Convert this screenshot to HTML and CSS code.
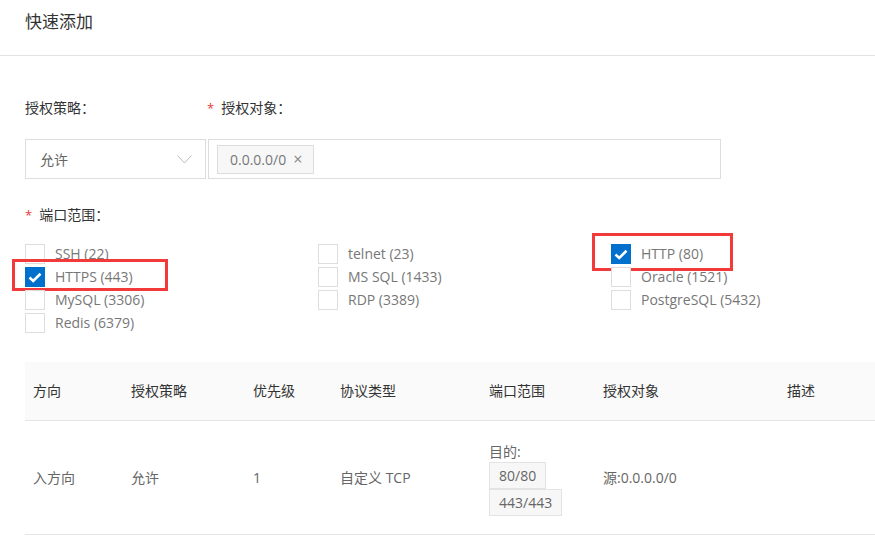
FILE: index.html
```html
<!DOCTYPE html>
<html lang="zh-CN">
<head>
<meta charset="utf-8">
<title>快速添加</title>
<link rel="stylesheet" href="styles.css">
</head>
<body>
<header class="head"><h1 class="title">快速添加</h1></header>

<section class="form">
  <div class="label-row">
    <div class="label label-policy">授权策略：</div>
    <div class="label"><span class="req">*</span>授权对象：</div>
  </div>
  <div class="input-row">
    <div class="select">
      <span>允许</span>
      <svg class="chev" width="15" height="9" viewBox="0 0 15 9"><path d="M0.5 0.5 L7.5 8 L14.5 0.5" fill="none" stroke="#bbb" stroke-width="1"/></svg>
    </div>
    <div class="tags-input">
      <span class="tag">0.0.0.0/0<span class="x">×</span></span>
    </div>
  </div>

  <div class="label label-ports"><span class="req">*</span>端口范围：</div>
  <div class="checks">
    <label class="check"><span class="box"></span>SSH (22)</label>
    <label class="check"><span class="box"></span>telnet (23)</label>
    <label class="check mark-b"><span class="box on"><svg width="14" height="11" viewBox="0 0 14 11"><path d="M1.5 5.5 L5.2 9 L12.5 1.8" fill="none" stroke="#fff" stroke-width="2.6"/></svg></span>HTTP (80)</label>
    <label class="check mark-a"><span class="box on"><svg width="14" height="11" viewBox="0 0 14 11"><path d="M1.5 5.5 L5.2 9 L12.5 1.8" fill="none" stroke="#fff" stroke-width="2.6"/></svg></span>HTTPS (443)</label>
    <label class="check"><span class="box"></span>MS SQL (1433)</label>
    <label class="check"><span class="box"></span>Oracle (1521)</label>
    <label class="check"><span class="box"></span>MySQL (3306)</label>
    <label class="check"><span class="box"></span>RDP (3389)</label>
    <label class="check"><span class="box"></span>PostgreSQL (5432)</label>
    <label class="check"><span class="box"></span>Redis (6379)</label>
  </div>
</section>

<section class="table">
  <div class="tr th">
    <div class="cell">方向</div>
    <div class="cell">授权策略</div>
    <div class="cell">优先级</div>
    <div class="cell">协议类型</div>
    <div class="cell">端口范围</div>
    <div class="cell">授权对象</div>
    <div class="cell">描述</div>
  </div>
  <div class="tr td">
    <div class="cell">入方向</div>
    <div class="cell">允许</div>
    <div class="cell">1</div>
    <div class="cell">自定义 TCP</div>
    <div class="cell ports">
      <div class="dest">目的:</div>
      <span class="ptag">80/80</span>
      <span class="ptag">443/443</span>
    </div>
    <div class="cell">源:0.0.0.0/0</div>
    <div class="cell"></div>
  </div>
</section>
</body>
</html>
```

FILE: styles.css
```css
*, *::before, *::after { box-sizing: border-box; }
html, body { margin: 0; padding: 0; background: #fff; }
body {
  font-family: "Open Sans", "Noto Sans CJK SC", sans-serif;
  font-size: 14px;
  color: #333;
  width: 875px;
  overflow: hidden;
}
.head {
  height: 56px;
  border-bottom: 1px solid #e3e3e3;
  padding: 11px 0 0 25px;
}
.title {
  margin: 0;
  font-size: 17px;
  font-weight: normal;
  line-height: 22px;
  color: #333;
}
.form { padding-left: 25px; }
.label { font-size: 14px; line-height: 20px; color: #333; }
.req { color: #e4393c; margin-right: 7px; font-size: 13px; }
.label-row { display: flex; margin-top: 42px; }
.label-policy { width: 182px; }
.input-row { display: flex; margin-top: 21px; height: 40px; }
.select {
  width: 181px;
  border: 1px solid #ddd;
  display: flex;
  align-items: center;
  justify-content: space-between;
  padding: 0 13px 0 14px;
  color: #666;
}
.chev { margin-top: 1px; }
.tags-input {
  margin-left: 2px;
  width: 513px;
  border: 1px solid #ddd;
  padding: 4px 8px;
  display: flex;
  align-items: center;
}
.tag {
  height: 29px;
  border: 1px solid #ddd;
  background: #f7f7f7;
  color: #777;
  display: inline-flex;
  align-items: center;
  padding: 0 11px 0 12px;
}
.tag .x { margin-left: 7px; font-size: 16px; color: #888; }
.label-ports { margin-top: 26px; }
.checks {
  display: grid;
  grid-template-columns: 293px 293px 1fr;
  grid-auto-rows: 23px;
  margin-top: 19px;
}
.check {
  position: relative;
  display: flex;
  align-items: center;
  height: 20px;
  color: #777;
  line-height: 20px;
}
.box {
  width: 20px;
  height: 20px;
  border: 1px solid #ddd;
  margin-right: 10px;
  display: inline-flex;
  align-items: center;
  justify-content: center;
  background: #fff;
}
.box.on { background: #0070cc; border-color: #0070cc; }
.mark-a::after, .mark-b::after {
  content: "";
  position: absolute;
  border: 3px solid #f23a3a;
}
.mark-a::after { left: -13px; top: -8px; width: 156px; height: 32px; }
.mark-b::after { left: -19px; top: -11px; width: 141px; height: 38px; }

.table { margin: 26px 0 0 25px; }
.tr {
  display: grid;
  grid-template-columns: 98px 122px 87px 149px 114px 184px 1fr;
  border-bottom: 1px solid #e5e5e5;
  align-items: center;
}
.th { height: 59px; background: #fafafa; color: #333; }
.td { height: 114px; color: #666; }
.cell { padding-left: 8px; line-height: 20px; }
.ports { display: flex; flex-direction: column; align-items: flex-start; padding-top: 2px; }
.dest { line-height: 20px; }
.ptag {
  display: inline-block;
  border: 1px solid #e3e3e3;
  background: #f7f7f7;
  padding: 0 9px;
  line-height: 25px;
  margin-top: 0;
}
```
